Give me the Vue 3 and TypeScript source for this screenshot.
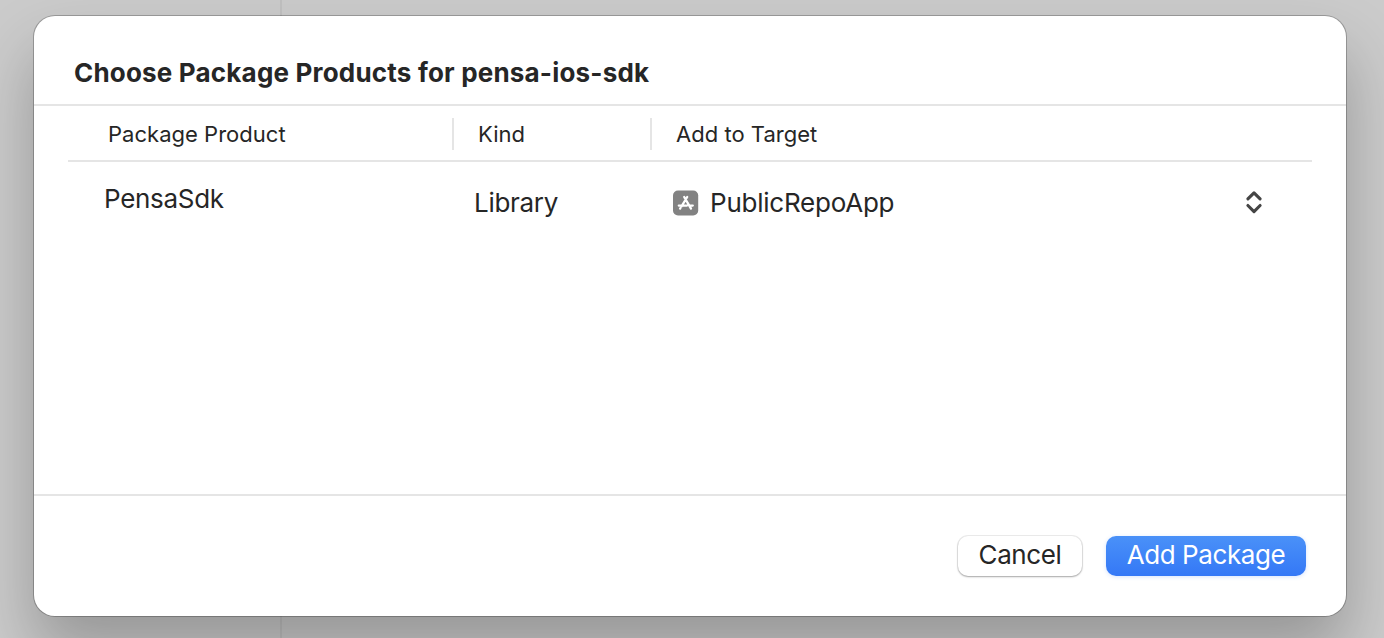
<script setup lang="ts">
interface PackageProduct {
  name: string
  kind: string
  target: string
}

const packageName = 'pensa-ios-sdk'
const products: PackageProduct[] = [
  { name: 'PensaSdk', kind: 'Library', target: 'PublicRepoApp' },
]
</script>

<template>
  <div class="backdrop">
    <section class="sheet" role="dialog">
      <header class="title-bar">
        <h1 class="title">Choose Package Products for {{ packageName }}</h1>
      </header>
      <main class="table">
        <div class="grid head">
          <span class="th product-head">Package Product</span>
          <span class="th kind-head">Kind</span>
          <span class="th target-head">Add to Target</span>
        </div>
        <div v-for="product in products" :key="product.name" class="grid row">
          <span class="product">{{ product.name }}</span>
          <span class="kind">{{ product.kind }}</span>
          <div class="target">
            <svg class="app-icon" viewBox="0 0 26 26">
              <rect x="0" y="0.5" width="25.2" height="25" rx="5" fill="#828282" />
              <g fill="none" stroke="#fff" stroke-width="2.3" stroke-linecap="round">
                <path d="M14.2 7 8.5 16.4M11.2 7 18 18.6M5.8 15.6H14M17.2 15.6H19.8M7.4 18.1 7.1 18.6" />
              </g>
            </svg>
            <span class="target-name">{{ product.target }}</span>
            <svg class="chevrons" viewBox="0 0 18 24">
              <path d="M2.9 8.9 9 2.8l6.1 6.1M2.9 15.5 9 21.6l6.1-6.1" fill="none" stroke="#454545" stroke-width="3.1" stroke-linecap="round" stroke-linejoin="round" />
            </svg>
          </div>
        </div>
      </main>
      <footer class="actions">
        <button class="button cancel" type="button"><span>Cancel</span></button>
        <button class="button add" type="button"><span>Add Package</span></button>
      </footer>
    </section>
  </div>
</template>

<style>
body {
  margin: 0;
}
</style>

<style scoped>
.backdrop {
  box-sizing: border-box;
  width: 1384px;
  height: 638px;
  padding: 16px 38px 22px 34px;
  overflow: hidden;
  background: linear-gradient(90deg, transparent 280px, #c0c0c0 280px, #c0c0c0 282px, transparent 282px) #cbcbcb;
  font-family: Inter, "Liberation Sans", sans-serif;
  color: #262626;
}

.sheet {
  display: flex;
  flex-direction: column;
  height: 600px;
  border-radius: 21px;
  background: #fff;
  box-shadow: 0 0 0 1px rgba(0, 0, 0, 0.24), 0 36px 64px rgba(0, 0, 0, 0.26);
}

.title-bar {
  height: 88px;
  padding-left: 40px;
  border-bottom: 2px solid #e5e5e5;
}

.title {
  margin: 0;
  padding-top: 41px;
  font-size: 26px;
  line-height: 32px;
  font-weight: 700;
  letter-spacing: 0.19px;
  white-space: nowrap;
}

.table {
  flex: 1;
  padding: 0 34px;
}

.grid {
  display: grid;
  grid-template-columns: 384px 198px 1fr;
}

.head {
  box-sizing: border-box;
  height: 56px;
  padding-top: 12px;
  border-bottom: 2px solid #e5e5e5;
}

.th {
  height: 32px;
  font-size: 22px;
  line-height: 32px;
  letter-spacing: 0.02px;
}

.product-head {
  padding-left: 40px;
}

.kind-head,
.target-head {
  padding-left: 24px;
  border-left: 2px solid #e5e5e5;
}

.row {
  padding-top: 21px;
  font-size: 26px;
  line-height: 32px;
  letter-spacing: -0.3px;
}

.product {
  padding-left: 36px;
}

.kind {
  padding: 4px 0 0 22px;
}

.target {
  display: flex;
  align-items: center;
  padding: 4px 49px 0 23px;
}

.app-icon {
  width: 26px;
  height: 26px;
}

.target-name {
  flex: 1;
  margin-left: 11px;
  letter-spacing: -0.23px;
}

.chevrons {
  width: 18px;
  height: 24px;
  margin-top: -2px;
}

.actions {
  display: flex;
  justify-content: flex-end;
  gap: 24px;
  height: 80px;
  padding: 40px 40px 0 0;
  border-top: 2px solid #e5e5e5;
}

.button {
  height: 40px;
  padding: 0 0 2px;
  border: 0;
  border-radius: 10px;
  font: 400 26px/38px Inter, "Liberation Sans", sans-serif;
  letter-spacing: -0.4px;
  white-space: nowrap;
}

.cancel {
  width: 124px;
  background: #fff;
  color: #262626;
  box-shadow: 0 0 0 1px rgba(0, 0, 0, 0.07), 0 1px 2px rgba(0, 0, 0, 0.3);
}

.add {
  width: 200px;
  background: linear-gradient(#4a91f8, #3478f6);
  color: #fff;
  box-shadow: 0 1px 4px rgba(52, 120, 246, 0.2);
}
</style>
